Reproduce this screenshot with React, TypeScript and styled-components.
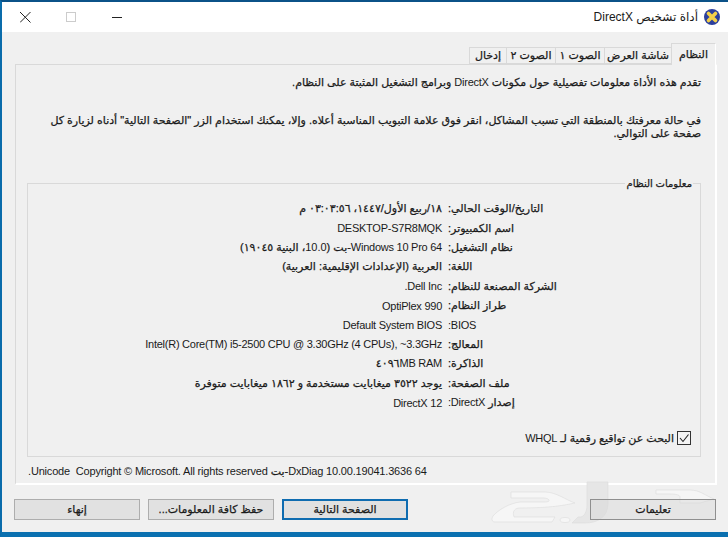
import * as React from 'react';
import styled, { createGlobalStyle } from 'styled-components';

const GlobalStyle = createGlobalStyle`
    html, body {
        margin: 0;
        padding: 0;
        width: 728px;
        height: 537px;
        overflow: hidden;
        background: #f0f0f0;
    }
`;

const Frame = styled.div`
    position: relative;
    box-sizing: border-box;
    width: 728px;
    height: 537px;
    display: flex;
    flex-direction: column;
    border-top: 2px solid #0b5288;
    border-left: 2px solid #0a6cab;
    border-bottom: 5px solid #0a70b0;
    background: #f0f0f0;
    font-family: "Liberation Sans", "DejaVu Sans", sans-serif;
    font-size: 11px;
    font-weight: normal;
    -webkit-text-stroke: 0.25px #1a1a1a;
    color: #1a1a1a;
    direction: rtl;
`;

const Latin = styled.span<{ $loose?: boolean }>`
    font-size: 11px;
    font-weight: normal;
    letter-spacing: ${(p) => (p.$loose ? '-0.18px' : '-0.25px')};
    -webkit-text-stroke: 0;
`;

const TitleBar = styled.div`
    height: 30px;
    flex: none;
    display: flex;
    align-items: center;
    background: #fff;
    padding: 0 8px 0 18px;
    -webkit-text-stroke: 0;
`;

const TitleIcon = styled.svg`
    width: 16px;
    height: 16px;
    margin-left: 6px;
`;

const TitleText = styled.span`
    font-size: 12px;
    font-weight: normal;
    flex: 1;
`;

const WindowButtons = styled.div`
    display: flex;
    direction: ltr;
    align-items: center;
`;

const WinButton = styled.svg`
    width: 46px;
    height: 12px;
    flex: none;
    &:last-child {
        width: 10px;
    }
`;

const Tabs = styled.div`
    display: flex;
    height: 21px;
    margin: 11px 12px 0 0;
    flex: none;
    position: relative;
    z-index: 1;
`;

const Tab = styled.div<{ $active?: boolean; $width: number }>`
    box-sizing: border-box;
    height: ${(p) => (p.$active ? '22px' : '17px')};
    margin-top: ${(p) => (p.$active ? '0' : '4px')};
    width: ${(p) => p.$width}px;
    display: flex;
    align-items: center;
    justify-content: center;
    white-space: nowrap;
    background: #f0f0f0;
    border: 1px solid #d9d9d9;
    border-bottom: ${(p) => (p.$active ? 'none' : '1px solid #d9d9d9')};
    border-right-color: ${(p) => (p.$active ? '#fff' : '#d9d9d9')};
    margin-left: -1px;
`;

const Panel = styled.div`
    box-sizing: border-box;
    flex: none;
    height: 421px;
    margin: 0 11px 0 13px;
    padding: 11px 14px 0 11px;
    border: 1px solid #d9d9d9;
    border-right: 2px solid #fff;
    border-bottom: 2px solid #fff;
    display: flex;
    flex-direction: column;
`;

const Paragraph = styled.p<{ $gap?: number }>`
    margin: ${(p) => p.$gap ?? 0}px 0 0 0;
    line-height: 13px;
    white-space: nowrap;
`;

const GroupBox = styled.fieldset`
    box-sizing: border-box;
    margin: 37px 0 0 0;
    padding: 9px 0 0 0;
    height: 280px;
    border: 1px solid #d9d9d9;
    min-inline-size: 0;
`;

const GroupLegend = styled.legend`
    padding: 0 1px;
    margin-right: 7px;
    font-size: 10px;
    line-height: 13px;
`;

const InfoGrid = styled.div`
    display: grid;
    grid-template-columns: 252px 1fr;
    grid-auto-rows: 19.4px;
    align-items: center;
`;

const InfoLabel = styled.div`
    text-align: left;
    white-space: nowrap;
`;

const InfoValue = styled.div`
    white-space: nowrap;
    padding-right: 6px;
`;

const CheckRow = styled.div`
    display: flex;
    align-items: center;
    gap: 3px;
    margin: 19px 9px 0 0;
`;

const CheckBox = styled.span`
    box-sizing: border-box;
    width: 14px;
    height: 14px;
    border: 1px solid #333;
    background: #f4f4f4;
    display: flex;
`;

const StatusLine = styled.div`
    margin-top: 8px;
    margin-left: 1px;
    line-height: 13px;
    text-align: left;
    white-space: nowrap;
`;

const ButtonRow = styled.div`
    display: flex;
    direction: ltr;
    justify-content: space-between;
    margin: 14px 12px 0 12px;
`;

const ButtonGroup = styled.div`
    display: flex;
    gap: 8px;
`;

const Button = styled.div<{ $primary?: boolean; $ghost?: boolean }>`
    box-sizing: border-box;
    position: relative;
    z-index: 1;
    width: 126px;
    height: 21px;
    display: flex;
    align-items: center;
    justify-content: center;
    direction: rtl;
    background: ${(p) => (p.$ghost ? 'rgba(215, 215, 215, 0.45)' : '#e1e1e1')};
    border: ${(p) => (p.$primary ? '2px solid #0f6cb0' : p.$ghost ? '1px solid #8f8f8f' : '1px solid #adadad')};
`;

const Watermark = styled.svg`
    position: absolute;
    right: 0;
    bottom: 0;
    width: 248px;
    height: 54px;
    pointer-events: none;
`;

const rows: { label: React.ReactNode; value: React.ReactNode }[] = [
    { label: 'التاريخ/الوقت الحالي:', value: '١٨/ربيع الأول/١٤٤٧، ٠٣:٠٣:٥٦ م' },
    { label: 'اسم الكمبيوتر:', value: <Latin>DESKTOP-S7R8MQK</Latin> },
    { label: 'نظام التشغيل:', value: <><Latin>Windows 10 Pro 64</Latin>-بت (<Latin>10.0</Latin>، البنية ١٩٠٤٥)</> },
    { label: 'اللغة:', value: 'العربية (الإعدادات الإقليمية: العربية)' },
    { label: 'الشركة المصنعة للنظام:', value: <Latin>Dell Inc.</Latin> },
    { label: 'طراز النظام:', value: <Latin>OptiPlex 990</Latin> },
    { label: <Latin>BIOS:</Latin>, value: <Latin>Default System BIOS</Latin> },
    { label: 'المعالج:', value: <Latin>Intel(R) Core(TM) i5-2500 CPU @ 3.30GHz (4 CPUs), ~3.3GHz</Latin> },
    { label: 'الذاكرة:', value: <>٤٠٩٦<Latin>MB RAM</Latin></> },
    { label: 'ملف الصفحة:', value: 'يوجد ٣٥٢٢ ميغابايت مستخدمة و ١٨٦٢ ميغابايت متوفرة' },
    { label: <>إصدار <Latin>DirectX:</Latin></>, value: <Latin>DirectX 12</Latin> },
];

const tabs = [
    { name: 'النظام', width: 45 },
    { name: 'شاشة العرض', width: 68 },
    { name: 'الصوت ١', width: 50 },
    { name: 'الصوت ٢', width: 50 },
    { name: 'إدخال', width: 38 },
];

export default function App() {
    return (
        <Frame>
            <GlobalStyle />
            <TitleBar>
                <TitleIcon viewBox="0 0 16 16">
                    <circle cx="8" cy="8" r="8" fill="#2b3f9e" />
                    <path d="M4.5 4.5 L11.5 11.5 M11.5 4.5 L4.5 11.5" stroke="#f3d04a" strokeWidth="3.6" strokeLinecap="round" />
                </TitleIcon>
                <TitleText>أداة تشخيص DirectX</TitleText>
                <WindowButtons>
                    <WinButton viewBox="0 0 46 12">
                        <path d="M0 1 L10.5 11.5 M10.5 1 L0 11.5" stroke="#222" strokeWidth="1" fill="none" />
                    </WinButton>
                    <WinButton viewBox="0 0 46 12">
                        <rect x="0.5" y="1.5" width="9" height="9" fill="none" stroke="#ccc" />
                    </WinButton>
                    <WinButton viewBox="0 0 10 12">
                        <path d="M0 6.5 H10" stroke="#222" strokeWidth="1" />
                    </WinButton>
                </WindowButtons>
            </TitleBar>
            <Tabs>
                {tabs.map((t, i) => (
                    <Tab key={t.name} $active={i === 0} $width={t.width}>{t.name}</Tab>
                ))}
            </Tabs>
            <Panel>
                <Paragraph>تقدم هذه الأداة معلومات تفصيلية حول مكونات <Latin>DirectX</Latin> وبرامج التشغيل المثبتة على النظام.</Paragraph>
                <Paragraph $gap={25}>
                    في حالة معرفتك بالمنطقة التي تسبب المشاكل، انقر فوق علامة التبويب المناسبة أعلاه. وإلا، يمكنك استخدام الزر "الصفحة التالية" أدناه لزيارة كل
                    <br />
                    صفحة على التوالي.
                </Paragraph>
                <GroupBox>
                    <GroupLegend>معلومات النظام</GroupLegend>
                    <InfoGrid>
                        {rows.map((r, i) => (
                            <React.Fragment key={i}>
                                <InfoLabel>{r.label}</InfoLabel>
                                <InfoValue>{r.value}</InfoValue>
                            </React.Fragment>
                        ))}
                    </InfoGrid>
                    <CheckRow>
                        <CheckBox>
                            <svg viewBox="0 0 12 12" width="12" height="12">
                                <path d="M2 6 L5 9.5 L10.5 2.5" fill="none" stroke="#222" strokeWidth="1.1" />
                            </svg>
                        </CheckBox>
                        <span>البحث عن تواقيع رقمية لـ <Latin>WHQL</Latin></span>
                    </CheckRow>
                </GroupBox>
                <StatusLine>
                    <Latin $loose>DxDiag 10.00.19041.3636 64</Latin>-بت <Latin $loose>Unicode&nbsp; Copyright © Microsoft. All rights reserved.</Latin>
                </StatusLine>
            </Panel>
            <ButtonRow>
                <ButtonGroup>
                    <Button>إنهاء</Button>
                    <Button>حفظ كافة المعلومات...</Button>
                    <Button $primary>الصفحة التالية</Button>
                </ButtonGroup>
                <Button $ghost>تعليمات</Button>
            </ButtonRow>
            <Watermark viewBox="480 478 248 54">
                <g fill="#e6e6e6" stroke="#dcdcdc" strokeWidth="0.6">
                    <path d="M511 492 H545 C556 492 566 500 575 503 C565 505 552 508 520 508 C515 508 512 511 514 517 H555 L552 522 H495 C492 522 491 519 493 516 C498 510 510 503 520 502 H545 C552 502 549 498 544 498 H511 Z" fill="#f6f6f6" />
                    <path d="M587 482 H608 V503 C608 517 598 523 585 523 H572 L578 517 H580 C584 517 587 512 587 505 Z" />
                    <path d="M656 490 H690 C700 490 706 496 714 499 L700 503 H680 V497 C680 495 676 494 670 494 H656 Z" fill="#f6f6f6" />
                    <ellipse cx="565" cy="520" rx="5" ry="2.5" fill="#f6f6f6" />
                </g>
            </Watermark>
        </Frame>
    );
}
